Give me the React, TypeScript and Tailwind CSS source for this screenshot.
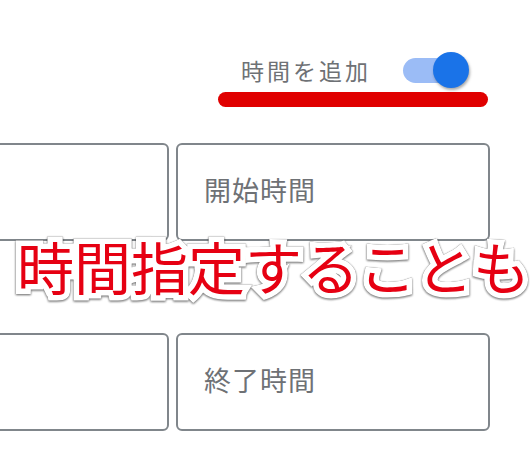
import { useState } from "react";

function Toggle({ on, onChange }: { on: boolean; onChange: (v: boolean) => void }) {
  return (
    <button
      type="button"
      onClick={() => onChange(!on)}
      className="relative flex h-[36px] w-[68px] items-center"
    >
      <span className={`ml-[2px] h-[25px] w-[58px] rounded-full ${on ? "bg-[#9bbcf6]" : "bg-[#c4c7c5]"}`} />
      <span
        className={`absolute top-0 h-[36px] w-[36px] rounded-full shadow-[1px_2px_3px_rgba(0,0,0,0.35)] ${
          on ? "right-[0px] bg-[#1a73e8]" : "left-0 bg-white"
        }`}
      />
    </button>
  );
}

function TimeField({ label }: { label?: string }) {
  return (
    <div className="flex h-[98px] flex-1 items-center rounded-[6px] border-2 border-[#80868b] pl-[26px] pb-[4px]">
      {label && <span className="text-[27px] tracking-[1px] text-[#6e7175]">{label}</span>}
    </div>
  );
}

export default function App() {
  const [withTime, setWithTime] = useState(true);

  return (
    <div className="h-[466px] w-[530px] overflow-hidden bg-white font-['Noto_Sans_CJK_JP',sans-serif]">
      <div className="ml-[218px] w-[270px] pt-[52px]">
        <div className="flex items-center">
          <span className="ml-[23px] text-[23px] tracking-[3px] text-[#6e7175]">時間を追加</span>
          <div className="ml-[30px]">
            <Toggle on={withTime} onChange={setWithTime} />
          </div>
        </div>
        <div className="mt-[4px] h-[15px] rounded-full bg-[#e00000]" />
      </div>

      <div className="mt-[36px] flex gap-[7px]">
        <div className="-ml-[31px] w-[200px]">
          <TimeField />
        </div>
        <div className="w-[314px]">
          <TimeField label="開始時間" />
        </div>
      </div>

      <div className="flex h-[92px] items-start pl-[17px]">
        <span className="-mt-[8px] text-[57px] font-normal leading-[64px] text-[#e60012] [-webkit-text-stroke:11px_white] [paint-order:stroke_fill] [filter:drop-shadow(0_1px_1px_rgba(0,0,0,0.45))_drop-shadow(0_0_0.5px_rgba(0,0,0,0.5))]">
          時間指定することも
        </span>
      </div>

      <div className="flex gap-[7px]">
        <div className="-ml-[31px] w-[200px]">
          <TimeField />
        </div>
        <div className="w-[314px]">
          <TimeField label="終了時間" />
        </div>
      </div>
    </div>
  );
}
